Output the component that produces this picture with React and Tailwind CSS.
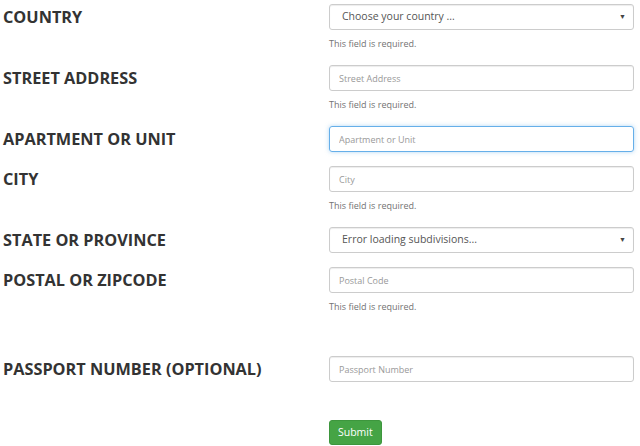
import { useState } from "react";

const fields = [
  { label: "COUNTRY", type: "select", value: "Choose your country ...", help: true },
  { label: "STREET ADDRESS", placeholder: "Street Address", help: true },
  { label: "APARTMENT OR UNIT", placeholder: "Apartment or Unit", focused: true },
  { label: "CITY", placeholder: "City", help: true },
  { label: "STATE OR PROVINCE", type: "select", value: "Error loading subdivisions..." },
  { label: "POSTAL OR ZIPCODE", placeholder: "Postal Code", help: true },
];

function Field({ field }) {
  return (
    <div className="flex mb-[14px]">
      <label className="w-[329px] h-[26px] flex items-center pl-[3px] text-[16.3px] font-bold text-[#333]">
        {field.label}
      </label>
      <div className="w-[305px]">
        {field.type === "select" ? (
          <div className="h-[26px] flex items-center justify-between border border-[#ccc] rounded-[3px] bg-white pl-[12px] pr-[7px] shadow-[inset_0_1px_1px_rgba(0,0,0,0.075)]">
            <span className="text-[10.5px] text-[#555]">{field.value}</span>
            <span className="text-[7px] text-[#444]">▼</span>
          </div>
        ) : (
          <input
            className={
              field.focused
                ? "block w-full h-[26px] border border-[#66afe9] rounded-[3px] px-[9px] text-[9px] outline-none placeholder:text-[#999] shadow-[0_0_4px_rgba(102,175,233,0.5)]"
                : "block w-full h-[26px] border border-[#ccc] rounded-[3px] px-[9px] text-[9px] outline-none placeholder:text-[#999] shadow-[inset_0_1px_1px_rgba(0,0,0,0.075)]"
            }
            placeholder={field.placeholder}
          />
        )}
        {field.help && (
          <p className="mt-[7px] h-[14px] leading-[14px] text-[9px] text-[#737373]">
            This field is required.
          </p>
        )}
      </div>
    </div>
  );
}

export default function App() {
  const [passport, setPassport] = useState("");

  return (
    <div
      className="w-[640px] h-[446px] bg-white pt-[4px] overflow-hidden flex flex-col"
      style={{ fontFamily: "'Open Sans', sans-serif" }}
    >
      {fields.map((f) => (
        <Field key={f.label} field={f} />
      ))}

      <div className="flex mt-[28px]">
        <label className="w-[329px] h-[26px] flex items-center pl-[3px] text-[16.3px] font-bold text-[#333]">
          PASSPORT NUMBER (OPTIONAL)
        </label>
        <input
          value={passport}
          onChange={(e) => setPassport(e.target.value)}
          className="block w-[305px] h-[26px] border border-[#ccc] rounded-[3px] px-[9px] text-[9px] outline-none placeholder:text-[#999] shadow-[inset_0_1px_1px_rgba(0,0,0,0.075)]"
          placeholder="Passport Number"
        />
      </div>

      <div className="pl-[329px] mt-[36px]">
        <button className="h-[25px] px-[8px] rounded-[3px] bg-[#45a445] border border-[#3d963d] text-white text-[10.5px]">
          Submit
        </button>
      </div>
    </div>
  );
}
